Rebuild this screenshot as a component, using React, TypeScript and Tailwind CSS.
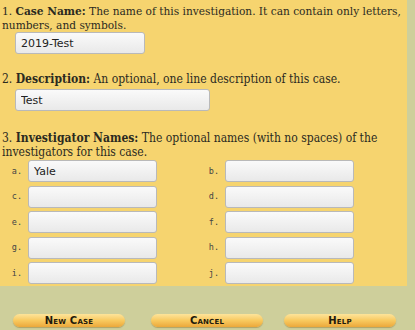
import { useState } from 'react';

const inputCls =
  'h-[22px] rounded-[3px] border border-[#b9b9b9] bg-gradient-to-b from-[#fafafa] to-[#e9e9e9] px-[5px] text-[11px] text-[#222] outline-none font-["DejaVu_Sans",sans-serif]';

const letters = ['a', 'b', 'c', 'd', 'e', 'f', 'g', 'h', 'i', 'j'];

function Btn({ label, className = '' }: { label: string; className?: string }) {
  return (
    <button className={`h-[13px] w-[112px] rounded-full bg-gradient-to-b from-[#fde49a] via-[#f8c95e] to-[#eba83a] shadow-[0_1px_1px_rgba(120,80,0,0.35)] flex items-center justify-center ${className}`}>
      <span className="text-[10px] leading-none font-bold [font-variant:small-caps] text-[#1f1a0c] tracking-[0.2px] font-['DejaVu_Sans',sans-serif]">
        {label}
      </span>
    </button>
  );
}

export default function App() {
  const [names, setNames] = useState<string[]>(['Yale', '', '', '', '', '', '', '', '', '']);

  return (
    <div className="w-[415px] h-[330px] bg-[#cecf9b] font-['DejaVu_Serif',serif] text-[#2b2a1f] overflow-hidden">
      <div className="w-[407px] h-[286px] bg-[#f6d46f] pt-[4px] pl-[2px]">
        <p className="text-[11.8px] leading-[14px] [font-stretch:condensed]">
          1. <b>Case Name:</b> The name of this investigation. It can contain only letters, numbers, and symbols.
        </p>
        <input className={`${inputCls} block ml-[13px] w-[130px]`} defaultValue="2019-Test" />

        <p className="text-[12px] leading-[14px] mt-[18px] [font-stretch:condensed]">
          2. <b>Description:</b> An optional, one line description of this case.
        </p>
        <input className={`${inputCls} block ml-[13px] mt-[3px] w-[195px]`} defaultValue="Test" />

        <p className="text-[12px] leading-[14px] mt-[20px] [font-stretch:condensed]">
          3. <b>Investigator Names:</b> The optional names (with no spaces) of the investigators for this case.
        </p>
        <div className="grid grid-cols-[197px_160px] gap-y-[3.5px] mt-[1px]">
          {letters.map((l, i) => (
            <div key={l} className="flex items-center">
              <span className="w-[20px] text-right text-[8.5px] font-['DejaVu_Sans_Mono',monospace] text-[#444]">
                {l}.
              </span>
              <input
                className={`${inputCls} ml-[6px] w-[129px] ${i === 0 ? 'border-[#7eb0c6]' : ''}`}
                value={names[i]}
                onChange={(e) => {
                  const n = [...names];
                  n[i] = e.target.value;
                  setNames(n);
                }}
              />
            </div>
          ))}
        </div>
      </div>
      <div className="flex pl-[13px] mt-[28px]">
        <Btn label="New Case" className="mr-[26px]" />
        <Btn label="Cancel" className="mr-[21px]" />
        <Btn label="Help" />
      </div>
    </div>
  );
}
